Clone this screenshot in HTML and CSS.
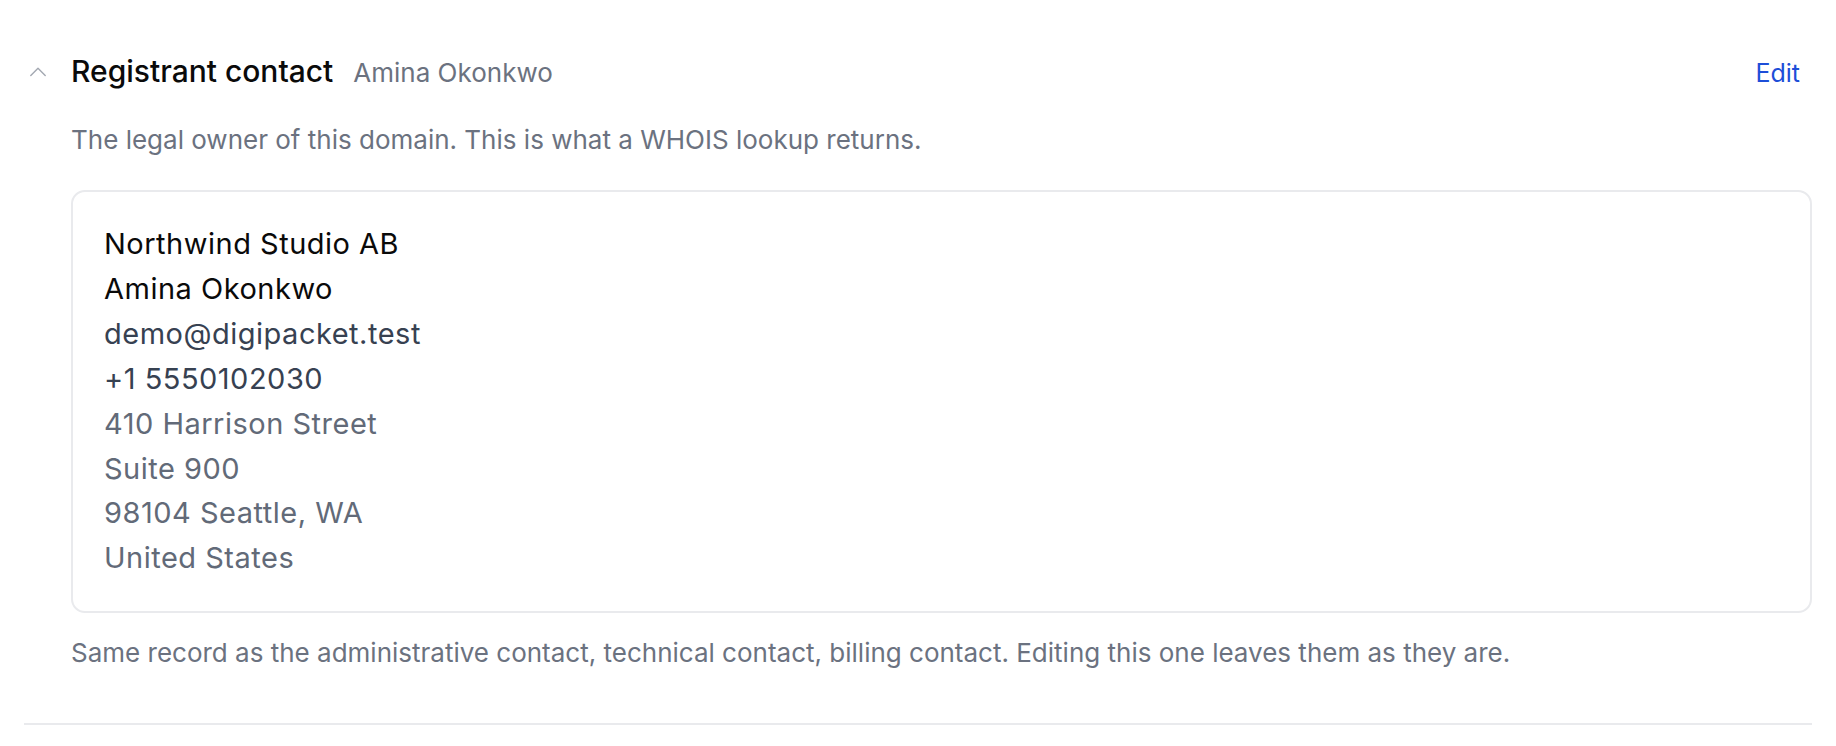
FILE: index.html
```html
<!DOCTYPE html>
<html lang="en">
<head>
<meta charset="utf-8">
<title>Registrant contact</title>
<link rel="stylesheet" href="styles.css">
</head>
<body>
<section class="contact-section">
  <div class="contact-header">
    <button class="toggle" type="button" aria-label="Collapse">
      <svg width="16" height="16" viewBox="0 0 16 16" fill="none" stroke="currentColor" stroke-width="1.4" stroke-linecap="round" stroke-linejoin="round"><path d="M0.8 12.4 L8 5.2 L15.2 12.4"/></svg>
    </button>
    <h2 class="title">Registrant contact</h2>
    <span class="owner">Amina Okonkwo</span>
    <a class="edit" href="#">Edit</a>
  </div>
  <div class="contact-body">
    <p class="desc">The legal owner of this domain. This is what a WHOIS lookup returns.</p>
    <div class="card">
      <div class="line strong">Northwind Studio AB</div>
      <div class="line strong">Amina Okonkwo</div>
      <div class="line mid">demo@digipacket.test</div>
      <div class="line mid">+1 5550102030</div>
      <div class="line muted">410 Harrison Street</div>
      <div class="line muted">Suite 900</div>
      <div class="line muted">98104 Seattle, WA</div>
      <div class="line muted">United States</div>
    </div>
    <p class="note">Same record as the administrative contact, technical contact, billing contact. Editing this one leaves them as they are.</p>
  </div>
</section>
</body>
</html>
```

FILE: styles.css
```css
html, body {
  margin: 0;
  background: #ffffff;
}

body {
  font-family: Inter, "Noto Sans", "Liberation Sans", sans-serif;
  color: #0a0a0a;
}

.contact-section {
  margin: 0 24px;
  padding: 51px 0 50px;
  border-bottom: 2px solid #e9eaed;
}

.contact-header {
  display: flex;
  align-items: baseline;
  height: 40px;
  line-height: 40px;
}

.toggle {
  align-self: center;
  width: 47px;
  height: 16px;
  padding: 0 0 0 5.5px;
  margin: 0;
  border: 0;
  background: none;
  color: #a3a8b1;
  display: flex;
  align-items: center;
  cursor: pointer;
}

.toggle svg {
  display: block;
}

.title {
  margin: 0;
  font-size: 30px;
  font-weight: 500;
  color: #0a0a0a;
  letter-spacing: 0;
}

.owner {
  margin-left: 20px;
  font-size: 26px;
  color: #6b7280;
}

.edit {
  margin-left: auto;
  margin-right: 12px;
  font-size: 25px;
  color: #1d4ed8;
  text-decoration: none;
}

.contact-body {
  margin-left: 47px;
}

.desc {
  margin: 29px 0 0;
  font-size: 26px;
  line-height: 40px;
  color: #6b7280;
}

.card {
  margin-top: 30px;
  border: 2px solid #e9eaed;
  border-radius: 14px;
  padding: 30px 31px 29.5px;
  font-size: 29px;
  letter-spacing: 0.5px;
  line-height: 44.9px;
}

.line.strong {
  color: #0a0a0a;
}

.line.mid {
  color: #374151;
}

.line.muted {
  color: #626a78;
}

.note {
  margin: 20.5px 0 0;
  font-size: 26px;
  line-height: 40px;
  color: #6b7280;
}
```
